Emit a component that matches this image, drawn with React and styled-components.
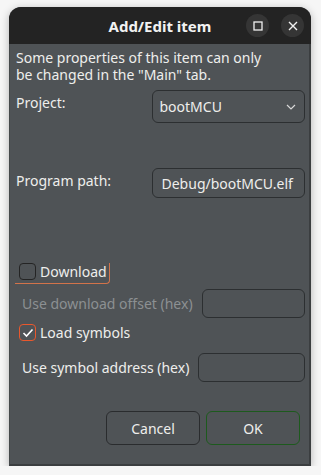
import React from "react";
import styled, { createGlobalStyle } from "styled-components";

const Global = createGlobalStyle`
  html, body {
    margin: 0;
    padding: 0;
    background: #f6f6f6;
  }
  body {
    font-family: "Noto Sans", "DejaVu Sans", sans-serif;
    font-size: 14px;
    color: #eeeeec;
  }
`;

const App = () => {
  return (
    <>
      <Global />
      <Window>
        <TitleBar>
          <Title>Add/Edit item</Title>
          <TitleButtons>
            <RoundButton aria-label="Maximize">
              <svg width="10" height="10" viewBox="0 0 10 10">
                <rect x="1" y="1" width="8" height="8" fill="none" stroke="#f0f0f0" strokeWidth="1.3" />
              </svg>
            </RoundButton>
            <RoundButton aria-label="Close">
              <svg width="10" height="10" viewBox="0 0 10 10">
                <path d="M1 1 L9 9 M9 1 L1 9" stroke="#f0f0f0" strokeWidth="1.4" />
              </svg>
            </RoundButton>
          </TitleButtons>
        </TitleBar>

        <Body>
          <Intro>
            <IntroLine>Some properties of this item can only</IntroLine>
            <IntroLine>be changed in the "Main" tab.</IntroLine>
          </Intro>

          <FormRow>
            <Label>Project:</Label>
            <Combo>
              <span>bootMCU</span>
              <svg width="10" height="6" viewBox="0 0 10 6">
                <path d="M1 1 L5 5 L9 1" fill="none" stroke="#d8d8d8" strokeWidth="1.2" />
              </svg>
            </Combo>
          </FormRow>

          <FormRow $top={45}>
            <Label>Program path:</Label>
            <Entry $width={154}>Debug/bootMCU.elf</Entry>
          </FormRow>

          <CheckRow $top={65}>
            <CheckBox />
            <FocusText>Download</FocusText>
          </CheckRow>

          <OptionRow $top={9}>
            <SubLabel $disabled>Use download offset (hex)</SubLabel>
            <Entry $width={103} $height={29} />
          </OptionRow>

          <CheckRow $top={6}>
            <CheckBox $checked>
              <svg width="12" height="10" viewBox="0 0 12 10">
                <path d="M1.5 5 L4.5 8 L10.5 1.5" fill="none" stroke="#ffffff" strokeWidth="1.6" />
              </svg>
            </CheckBox>
            <CheckText>Load symbols</CheckText>
          </CheckRow>

          <OptionRow $top={12}>
            <SubLabel>Use symbol address (hex)</SubLabel>
            <Entry $width={107} $height={29} />
          </OptionRow>

          <Actions>
            <Button>Cancel</Button>
            <Button $default>OK</Button>
          </Actions>
        </Body>
      </Window>
    </>
  );
};

const Window = styled.div`
  margin: 7px 0 0 9px;
  width: 302px;
  height: 459px;
  border-radius: 12px 12px 0 0;
  overflow: hidden;
  box-shadow: 0 2px 9px rgba(0, 0, 0, 0.28);
  display: flex;
  flex-direction: column;
  background: #4f5356;
`;

const TitleBar = styled.div`
  height: 37px;
  flex-shrink: 0;
  background: #232323;
  position: relative;
  display: flex;
  align-items: center;
  justify-content: center;
`;

const Title = styled.h1`
  margin: 0;
  font-size: 15px;
  font-weight: bold;
  color: #f2f2f2;
`;

const TitleButtons = styled.div`
  position: absolute;
  right: 7px;
  top: 7px;
  display: flex;
  gap: 12px;
`;

const RoundButton = styled.div`
  width: 23px;
  height: 23px;
  border-radius: 50%;
  background: #353535;
  display: flex;
  align-items: center;
  justify-content: center;
`;

const Body = styled.div`
  flex: 1;
  display: flex;
  flex-direction: column;
  padding: 6px 4px 0 6px;
  border-right: 2px solid #3b3e40;
  border-bottom: 2px solid #3b3e40;
  border-left: 1px solid #45494b;
`;

const Intro = styled.div`
  display: flex;
  flex-direction: column;
`;

const IntroLine = styled.span`
  line-height: 16.5px;
`;

const FormRow = styled.div`
  display: flex;
  align-items: flex-start;
  margin-top: ${(p) => p.$top || 7}px;
`;

const Label = styled.div`
  width: 136px;
  padding-top: 5px;
  line-height: 16px;
`;

const Combo = styled.div`
  box-sizing: border-box;
  width: 154px;
  height: 33px;
  border: 1px solid #2c2f31;
  border-radius: 6px;
  display: flex;
  align-items: center;
  justify-content: space-between;
  padding: 0 8px 0 7px;
`;

const Entry = styled.div`
  box-sizing: border-box;
  width: ${(p) => p.$width}px;
  height: ${(p) => p.$height || 30}px;
  border: 1px solid #2c2f31;
  border-radius: 6px;
  display: flex;
  align-items: center;
  padding: 0 9px;
  white-space: nowrap;
  overflow: hidden;
`;

const CheckRow = styled.div`
  display: flex;
  align-items: center;
  margin-top: ${(p) => p.$top}px;
  padding-left: 3px;
`;

const CheckBox = styled.div`
  box-sizing: border-box;
  width: 17px;
  height: 17px;
  border-radius: 4px;
  border: 1px solid ${(p) => (p.$checked ? "#e9582d" : "#242424")};
  display: flex;
  align-items: center;
  justify-content: center;
  margin-right: 4px;
`;

const CheckText = styled.span`
  line-height: 17px;
`;

const FocusText = styled(CheckText)`
  position: relative;
  &::after {
    content: "";
    position: absolute;
    left: -25px;
    right: -3px;
    top: 0;
    bottom: -4px;
    border-right: 1.5px solid #d2734a;
    border-bottom: 1.5px solid #d2734a;
    border-bottom-right-radius: 4px;
  }
`;

const OptionRow = styled.div`
  display: flex;
  align-items: center;
  justify-content: space-between;
  margin-top: ${(p) => p.$top}px;
  padding-left: 6px;
`;

const SubLabel = styled.span`
  color: ${(p) => (p.$disabled ? "#8c9092" : "#eeeeec")};
`;

const Actions = styled.div`
  margin-top: auto;
  margin-bottom: 19px;
  display: flex;
  justify-content: flex-end;
  gap: 6px;
  padding-right: 5px;
`;

const Button = styled.div`
  box-sizing: border-box;
  width: 94px;
  height: 34px;
  border-radius: 6px;
  border: 1px solid ${(p) => (p.$default ? "#1d5a1d" : "#2a2c2e")};
  display: flex;
  align-items: center;
  justify-content: center;
`;

export default App;
